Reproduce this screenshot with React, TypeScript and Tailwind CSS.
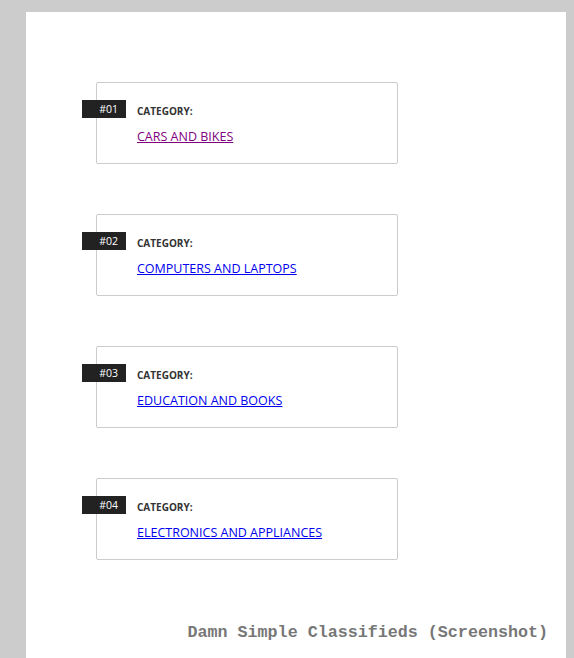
import React from 'react';

const categories = [
  { num: '#01', name: 'CARS AND BIKES', visited: true },
  { num: '#02', name: 'COMPUTERS AND LAPTOPS', visited: false },
  { num: '#03', name: 'EDUCATION AND BOOKS', visited: false },
  { num: '#04', name: 'ELECTRONICS AND APPLIANCES', visited: false },
];

const App: React.FC = () => {
  return (
    <div className="h-screen overflow-hidden bg-[#cccccc] pt-[12px] pl-[26px]">
      <div className="w-[540px] h-[700px] bg-white pt-[70px] pl-[70px]">
        {/* Category cards */}
        <div className="flex flex-col gap-[50px]">
          {categories.map((c) => (
            <div
              key={c.num}
              className="relative w-[302px] h-[82px] border border-[#cccccc] rounded-[2px] pl-[40px] pt-[21px]"
              style={{ fontFamily: '"Open Sans", sans-serif' }}
            >
              <div className="absolute left-[-15px] top-[17px] w-[44px] h-[18px] bg-[#222222] text-white text-[10.5px] leading-[18px] text-right pr-[8px]">
                {c.num}
              </div>
              <div className="text-[10px] font-bold text-[#333333] leading-[14px]">CATEGORY:</div>
              <a
                href="#"
                className={`block mt-[10px] text-[12.5px] leading-[18px] underline ${
                  c.visited ? 'text-[#800080]' : 'text-[#0000ee]'
                }`}
              >
                <span>{c.name}</span>
              </a>
            </div>
          ))}
        </div>

        {/* Footer */}
        <div
          className="mt-[60px] pr-[18px] text-right text-[16.7px] font-bold text-[#777777]"
          style={{ fontFamily: '"Liberation Mono", monospace' }}
        >
          Damn Simple Classifieds (Screenshot)
        </div>
      </div>
    </div>
  );
};

export default App;
